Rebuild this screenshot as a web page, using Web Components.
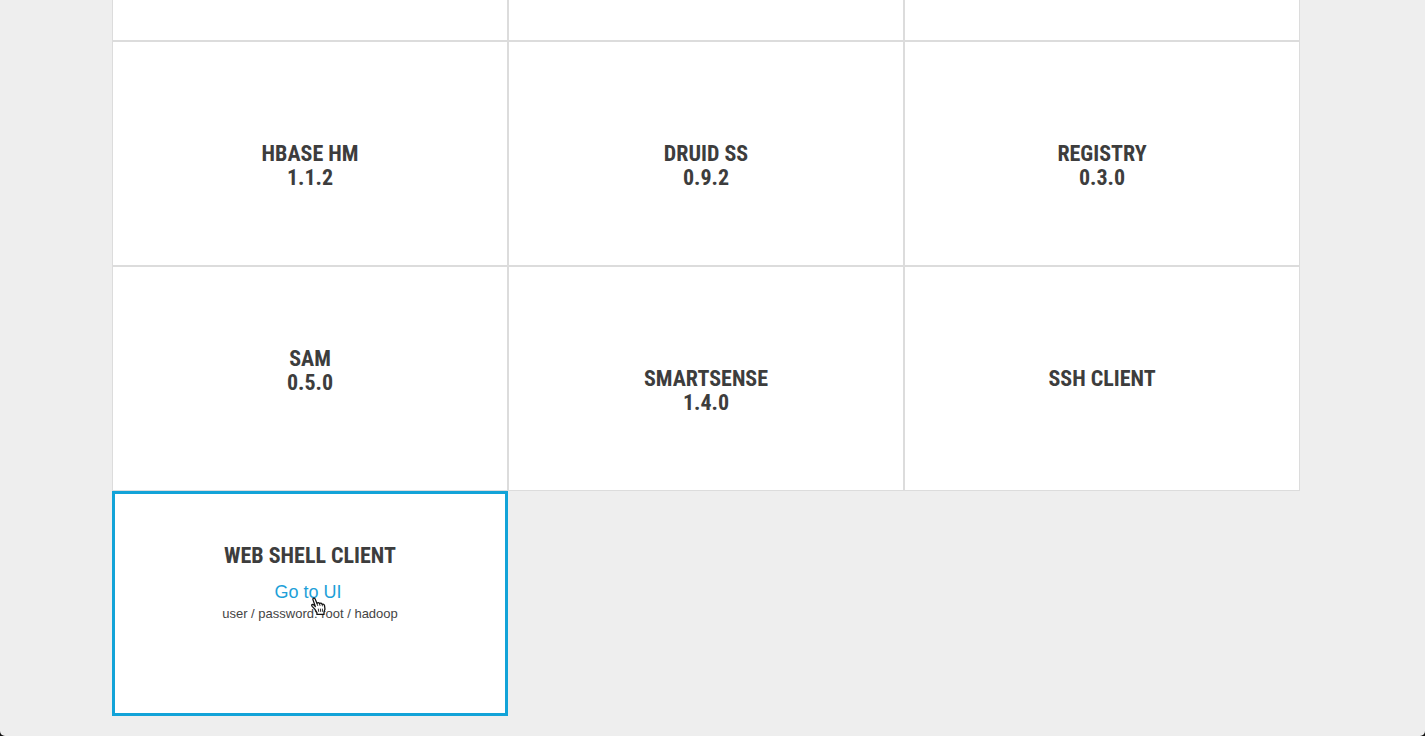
<!DOCTYPE html>
<html lang="en">
<head>
<meta charset="utf-8">
<title>Quick Links</title>
<style>
html { background: #111; }
body { margin: 0; overflow: hidden; }
</style>
</head>
<body>
<link-board>
  <service-tile class="cut"></service-tile>
  <service-tile class="cut"></service-tile>
  <service-tile class="cut"></service-tile>
  <service-tile name="HBASE HM" version="1.1.2"></service-tile>
  <service-tile name="DRUID SS" version="0.9.2"></service-tile>
  <service-tile name="REGISTRY" version="0.3.0"></service-tile>
  <service-tile class="raised" name="SAM" version="0.5.0"></service-tile>
  <service-tile name="SMARTSENSE" version="1.4.0"></service-tile>
  <service-tile name="SSH CLIENT"></service-tile>
  <service-tile class="active" name="WEB SHELL CLIENT">
    <tile-link href="#shell">Go to UI</tile-link>
    <tile-note>user / password: root / hadoop</tile-note>
  </service-tile>
</link-board>
<script>
const define = (name, html, setup) => {
  const template = document.createElement('template');
  template.innerHTML = html;
  customElements.define(name, class extends HTMLElement {
    connectedCallback() {
      if (this.shadowRoot) return;
      const root = this.attachShadow({ mode: 'open' });
      root.append(template.content.cloneNode(true));
      if (setup) setup(this, root);
    }
  });
};

define('link-board', `
<style>
:host { display: block; box-sizing: border-box; min-height: 100vh; padding: 0 125px 20px 112px;
  background: #eee; border-radius: 0 0 5px 5px; font-family: "Liberation Sans", Arial, sans-serif; }
main { display: grid; grid-template-columns: repeat(3, 1fr); grid-template-rows: 41px; grid-auto-rows: 225px; }
</style>
<main><slot></slot></main>`);

define('service-tile', `
<style>
:host { display: block; box-sizing: border-box; background: #fff; border: 1px solid #dcdcdc;
  padding-top: 100px; text-align: center; color: #3d3d3d; }
:host(.cut) { padding-top: 0; border-top: 0; }
:host(.raised) { padding-top: 80px; }
:host(.active) { border: 3px solid #12a3d8; padding-top: 50px; }
h2 { margin: 0; font: bold 22px/24px "Roboto Condensed", "Liberation Sans Narrow", Roboto, sans-serif; }
h2 span { display: block; }
</style>
<h2></h2><slot></slot>`, (host, root) => {
  const title = root.querySelector('h2');
  for (const key of ['name', 'version']) {
    if (!host.hasAttribute(key)) continue;
    const line = document.createElement('span');
    line.textContent = host.getAttribute(key);
    title.append(line);
  }
  if (!title.children.length) title.remove();
});

define('tile-link', `
<style>
:host { display: block; margin-top: 12px; padding-right: 4px; line-height: 24px; font-size: 18px; }
a { position: relative; display: inline-block; color: #1e9fd8; text-decoration: none; }
svg { position: absolute; left: 36px; top: 17px; z-index: 1; }
</style>
<a><slot></slot><svg width="17" height="18" viewBox="0 0 16 17" aria-hidden="true">
<path d="M4.5 11.5 2 8.8C.8 7.4 2.4 6.4 3.6 7.5L5 9 2.8 2.7C2.3 1 4.3.4 4.9 2L6.6 6.2C6.9 4.8 8.7 5 9 6.4 9.6 5.4 11 5.6 11.4 7 12.3 6.2 13.5 6.9 13.7 8.2L14.1 11.5 13.2 14V16.5H6.5V14.7Z" fill="#fff" stroke="#111" stroke-width="1.2" stroke-linejoin="round"/>
<path d="M6.6 6.2 7.3 8.4M9 6.4 9.5 8.4M11.4 7 11.8 8.8M7.8 11 8.2 14M9.8 11 10 14M11.7 11V14" fill="none" stroke="#111" stroke-width=".8"/>
</svg></a>`, (host, root) => {
  root.querySelector('a').href = host.getAttribute('href');
});

define('tile-note', `
<style>
:host { display: block; font-size: 13px; line-height: 20px; color: #444; }
</style>
<slot></slot>`);
</script>
</body>
</html>
